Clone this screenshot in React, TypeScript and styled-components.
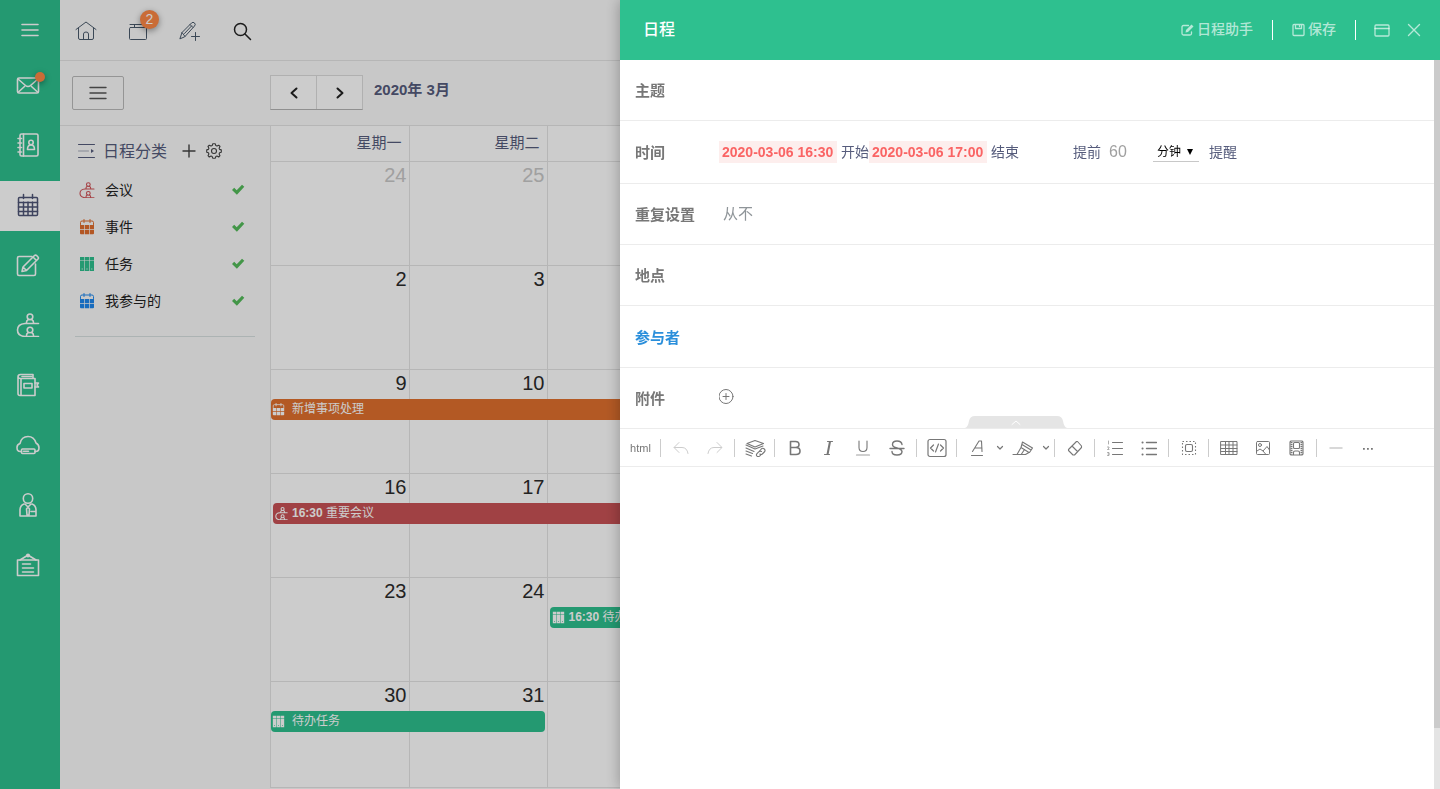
import React, { ReactNode } from "react";
import styled, { createGlobalStyle, css } from "styled-components";

const GlobalStyle = createGlobalStyle`
  *, *::before, *::after { box-sizing: border-box; }
  html, body, #root { height: 100%; }
  body {
    margin: 0;
    overflow: hidden;
    font-family: "Liberation Sans", "Noto Sans CJK SC", sans-serif;
    font-size: 14px;
    line-height: 20px;
    color: #5a5f7d;
  }
  button, input, select, textarea { font: inherit; color: inherit; margin: 0; }
  h1, h2, ul { margin: 0; padding: 0; }
`;

const green = "#2dc08e";

/* ---------- icons ---------- */

const Glyph = styled.svg`
  display: block;
  flex: none;
  fill: none;
  stroke: currentColor;
  stroke-linecap: round;
  stroke-linejoin: round;
`;

type IconProps = { w: number; h?: number; sw?: number; children: ReactNode };

function Icon({ w, h = w, sw = 1, children }: IconProps) {
  return (
    <Glyph width={w} height={h} viewBox={`0 0 ${w} ${h}`} strokeWidth={sw} aria-hidden="true">
      {children}
    </Glyph>
  );
}

const MenuLines = ({ sw = 1 }: { sw?: number }) => (
  <Icon w={18} h={14} sw={sw}>
    <path d="M1 1.500h16M1 7h16M1 12.500h16" />
  </Icon>
);

const MailIcon = () => (
  <Icon w={24} sw={1.6}>
    <rect x="1.500" y="5" width="21" height="15" rx="1.500" />
    <path d="M2 6l7.500 6.500q2.500 2 5 0L22 6M2.500 19l6-5.500M21.500 19l-6-5.500" />
  </Icon>
);

const ContactsIcon = () => (
  <Icon w={24} sw={1.6}>
    <rect x="4" y="1" width="18" height="22" rx="1.500" />
    <path d="M7.500 1v22M2 5.500h3.500M2 10h3.500M2 14.500h3.500M2 19h3.500" />
    <circle cx="15" cy="9.500" r="2.200" />
    <path d="M11.500 16.500q0-4.500 3.500-4.500t3.500 4.500z" />
  </Icon>
);

const CalendarIcon = () => (
  <Icon w={24} sw={1.5}>
    <rect x="2.500" y="4.500" width="19" height="18" rx="1" />
    <path d="M7.500 1.500v4M16.500 1.500v4M2.500 9.500h19M2.500 14h19M2.500 18.500h19M7.500 9v13M12 9v13M16.500 9v13" />
  </Icon>
);

const NoteIcon = () => (
  <Icon w={24} sw={1.6}>
    <path d="M16 3.500H3q-1.500 0-1.500 1.500v16q0 1.500 1.500 1.500h15q1.500 0 1.500-1.500V11" />
    <path d="M6 18.500l1-4.500L18.500 2.500q1-1 2.300.200l1 1q1.200 1.300.200 2.300L10.500 17.500zM17 4l3.500 3.500M7.500 14.500l3 3" />
  </Icon>
);

const MeetingIcon = ({ size = 24, sw = 1.6 }: { size?: number; sw?: number }) => (
  <Glyph width={size} height={size} viewBox="0 0 24 24" strokeWidth={sw} aria-hidden="true">
    <circle cx="14" cy="3.800" r="2.800" />
    <circle cx="14" cy="17" r="2.800" />
    <path d="M22.500 10.500H9q-7.500.500-7.500 6.500t7.500 6.500h13.500M12.300 6.500q-2 1-2 4M15.700 6.500q2 1 2 4M12.300 19.500q-2 1-2 4M15.700 19.500q2 1 2 4" />
  </Glyph>
);

const BookIcon = () => (
  <Icon w={24} sw={1.6}>
    <path d="M17 5V1.500H4.500Q2 1.500 2 4v16.500q0 2 2 2h15V5.500H4.500Q2 5.500 2 3.500M5 5.500v17" />
    <rect x="8" y="10.500" width="8" height="4.500" />
    <path d="M6 3.500h10M19 10h3.500l-1.500 2 1.500 2H19" />
  </Icon>
);

const CloudIcon = () => (
  <Icon w={24} sw={1.6}>
    <path d="M5.500 18.500H4.200Q1 18.500 1 14.500q0-3 3-4Q5.500 3.500 12 3.500q6 0 8 6.500 3 1.500 3 4.700 0 3.800-3.500 3.800h-.500" />
    <rect x="5.500" y="16" width="13.500" height="4.500" rx="1" />
    <path d="M7.500 18.300h5" />
  </Icon>
);

const PersonIcon = () => (
  <Icon w={24} sw={1.6}>
    <circle cx="12" cy="5.500" r="4.700" />
    <path d="M8 11q-4 1.500-4 6v6h16v-6q0-4.500-4-6M9 11l3 3 3-3M12 14l-1.500 2 .500 6h2l.500-6zM15 18.500h4" />
  </Icon>
);

const BoardIcon = () => (
  <Icon w={24} sw={1.6}>
    <rect x="1.500" y="7" width="21" height="15.500" />
    <path d="M4 7l6.500-4h3L20 7M6.500 11h8M6.500 15h11M6.500 19h11" />
    <circle cx="12" cy="2.500" r="1.300" fill="currentColor" />
  </Icon>
);

const HomeIcon = () => (
  <Icon w={22}>
    <path d="M1 9.500L11 2l10 7.500M3.500 8v10q0 1.500 1.500 1.500h12q1.500 0 1.500-1.500V8M8.500 19v-5q0-2 2.500-2t2.500 2v5" />
  </Icon>
);

const BoxIcon = () => (
  <Icon w={22}>
    <rect x="2.500" y="7.500" width="17" height="12" rx="1" />
    <path d="M3 4.500h16M7.500 4.500v2.500" />
  </Icon>
);

const PencilPlusIcon = () => (
  <Icon w={22}>
    <path d="M1 18.500l2-6L12.500 3q1.500-1.500 3 0t0 3L6 16.500zM3 12.500l3 4M11 4.500l3 3M5.500 13.500l7-7.500M16.500 12.500v8M12.500 16.500h8" />
  </Icon>
);

const SearchIcon = () => (
  <Icon w={22} sw={1.5}>
    <circle cx="9.500" cy="9.500" r="6" />
    <path d="M14 14l5.500 5.500" />
  </Icon>
);

const SmallCalendar = ({ size = 16 }: { size?: number }) => (
  <Glyph width={size} height={size} viewBox="0 0 16 16" strokeWidth="1" aria-hidden="true">
    <path d="M1.500 5.500v-2q0-1.500 1.500-1.500h10q1.500 0 1.500 1.500v2M5 .500v3M11 .500v3" />
    <path
      d="M1 6h4.200v4.200H1zM5.900 6h4.200v4.200H5.900zM10.800 6H15v4.200h-4.200zM1 11h4.200v4.200H2q-1 0-1-1zM5.900 11h4.200v4.200H5.900zM10.800 11H15v3.200q0 1-1 1h-3.200z"
      fill="currentColor"
      stroke="none"
    />
  </Glyph>
);

const TaskIcon = ({ size = 16 }: { size?: number }) => (
  <Glyph width={size} height={size} viewBox="0 0 16 16" aria-hidden="true">
    <path
      fillRule="evenodd"
      fill="currentColor"
      stroke="none"
      d="M1 1h4.300v3H1zM5.900 1h4.200v3H5.900zM10.700 1H15v3h-4.300zM1 4.600h4.300V15H1zM5.900 4.600h4.200V15H5.900zM10.700 4.600H15V15h-4.300zM2.700 12.500v1h1v-1zM7.500 12.500v1h1v-1zM12.300 12.500v1h1v-1z"
    />
  </Glyph>
);

const CheckIcon = () => (
  <Icon w={14} h={12}>
    <path d="M1 6l2.200-2.200 2.500 2.400L11 .700l2.300 2L5.900 10.800z" fill="currentColor" stroke="none" />
  </Icon>
);

const Chevron = ({ d, w = 10, h = 12, sw = 2 }: { d: string; w?: number; h?: number; sw?: number }) => (
  <Icon w={w} h={h} sw={sw}>
    <path d={d} />
  </Icon>
);

const GearIcon = () => (
  <Icon w={16} sw={1.1}>
    <path d="M6.700.800h2.600l.500 1.800 1.200.500 1.700-.900 1.300 1.300-.900 1.700.500 1.200 1.700.500v2.400l-1.700.500-.500 1.200.900 1.700-1.300 1.300-1.700-.900-1.200.500-.500 1.600H6.700l-.500-1.600-1.200-.500-1.700.900L2 12.700l.900-1.700-.500-1.200-1.700-.500V6.900l1.700-.500.500-1.200L2 3.500l1.300-1.300 1.700.900 1.200-.500z" />
    <circle cx="8" cy="8" r="2.500" />
  </Icon>
);

/* ---------- left rail ---------- */

const Page = styled.div`
  display: flex;
  min-height: 100%;
  background: #fafafa;
`;

const Rail = styled.nav`
  flex: none;
  width: 60px;
  background: ${green};
  display: flex;
  flex-direction: column;
  gap: 10px;
`;

const RailButton = styled.button<{ $active?: boolean; $first?: boolean }>`
  display: flex;
  align-items: center;
  justify-content: center;
  width: 60px;
  height: ${(p) => (p.$first ? 51 : 50)}px;
  padding: ${(p) => (p.$first ? "9px 0 0 0" : "0 4px 2px 0")};
  border: 0;
  background: ${(p) => (p.$active ? "#fff" : "transparent")};
  color: ${(p) => (p.$active ? "#4e5476" : "#fff")};
`;

const Anchor = styled.span`
  position: relative;
  display: block;
`;

const RedDot = styled.span`
  position: absolute;
  top: -1px;
  right: -5px;
  width: 10px;
  height: 10px;
  border-radius: 50%;
  background: #fc8745;
  box-shadow: 0 2px 6px rgba(0, 0, 0, 0.4);
`;

/* ---------- main area ---------- */

const Main = styled.main`
  flex: 1;
  min-width: 0;
  display: flex;
  flex-direction: column;
`;

const TopBar = styled.header`
  display: flex;
  align-items: center;
  height: 61px;
  border-bottom: 1px solid #e4e4e4;
`;

const TopButton = styled.button`
  display: flex;
  align-items: center;
  justify-content: center;
  width: 52px;
  height: 52px;
  padding: 2px 0 0;
  border: 0;
  background: transparent;
  color: #4a5a6c;
`;

const DarkTopButton = styled(TopButton)`
  color: #222;
`;

const CountBadge = styled.span`
  position: absolute;
  top: -10px;
  right: -10px;
  width: 19px;
  height: 19px;
  border-radius: 50%;
  background: #fc8745;
  color: #fff;
  font-size: 14px;
  line-height: 19px;
  text-align: center;
  box-shadow: 0 2px 6px rgba(0, 0, 0, 0.4);
`;

const CalendarBar = styled.div`
  display: flex;
  height: 65px;
  padding: 14px 12px 0;
  border-bottom: 1px solid #e4e4e4;
`;

const ToggleButton = styled.button`
  display: flex;
  align-items: center;
  justify-content: center;
  width: 52px;
  height: 34px;
  margin: 1px 146px 0 0;
  padding: 0;
  border: 1px solid #bbb;
  border-radius: 2px;
  background: transparent;
  color: #555;
`;

const Pager = styled.div`
  display: flex;
  height: 35px;
  border: 1px solid #ddd;
  border-bottom-color: #b5b5b5;
  background: #fff;
`;

const PagerButton = styled.button`
  display: flex;
  align-items: center;
  justify-content: center;
  width: 45px;
  padding: 0;
  border: 0;
  background: transparent;
  color: #222;
  & + & { border-left: 1px solid #ddd; width: 46px; }
`;

const MonthTitle = styled.h2`
  margin-left: 11px;
  padding-top: 5px;
  font-size: 15px;
  line-height: 20px;
  color: #565c7c;
`;

const Body = styled.div`
  flex: 1;
  display: flex;
  padding-bottom: 1px;
`;

const Sidebar = styled.aside`
  flex: none;
  width: 210px;
  padding: 11px 15px 0;
`;

const CategoryHead = styled.div`
  display: flex;
  align-items: center;
  height: 28px;
  padding-left: 3px;
  margin-bottom: 7px;
  color: #565c7c;
`;

const CategoryTitle = styled.h2`
  margin: 0 15px 0 8px;
  padding-top: 2px;
  font-size: 16px;
  font-weight: 400;
  line-height: 24px;
`;

const BareButton = styled.button`
  display: flex;
  padding: 0;
  border: 0;
  background: transparent;
  color: #444;
`;

const GearButton = styled(BareButton)`
  margin-left: 10px;
`;

const AttachButton = styled(BareButton)`
  color: #777;
`;

const CategoryList = styled.ul`
  list-style: none;
  padding-bottom: 16px;
  border-bottom: 1px solid #d8e0e0;
`;

const CategoryRow = styled.li`
  display: flex;
  align-items: center;
  height: 37px;
  padding: 0 10px 2px 4px;
`;

const Tint = styled.span<{ $color: string }>`
  color: ${(p) => p.$color};
`;

const CategoryName = styled.span`
  flex: 1;
  padding-left: 10px;
  color: #222;
`;

const MonthTable = styled.table`
  flex: 1;
  height: 100%;
  border-collapse: collapse;
  table-layout: fixed;
  background: #fff;
`;

const MonthGrid = styled.div`
  flex: 1;
  display: flex;
  border-left: 1px solid #e4e4e4;
`;

const WeekdayCell = styled.th`
  width: 138px;
  height: 35px;
  padding: 0 7px 0 0;
  border-right: 1px solid #e4e4e4;
  border-bottom: 1px solid #e4e4e4;
  font-size: 15px;
  font-weight: 400;
  text-align: right;
  color: #565c7c;
  &:last-child { width: auto; }
`;

const WeekRow = styled.tr`
  height: 104px;
  &:last-child { height: auto; }
`;

const DayCell = styled.td`
  padding: 0;
  vertical-align: top;
  border-right: 1px solid #e4e4e4;
  border-bottom: 1px solid #e4e4e4;
`;

const DayNumber = styled.div<{ $muted?: boolean }>`
  height: 29px;
  padding: 1px 2px 0 0;
  font-size: 20px;
  line-height: 24px;
  text-align: right;
  color: ${(p) => (p.$muted ? "#c8c8c8" : "#2b2b2b")};
`;

const EventBar = styled.div<{ $color: string; $span: string; $inset?: boolean }>`
  position: relative;
  display: flex;
  align-items: center;
  gap: 4px;
  width: ${(p) => p.$span};
  height: 21px;
  margin: 0 0 0 ${(p) => (p.$inset ? 2 : 0)}px;
  padding-left: ${(p) => (p.$inset ? 2 : 1)}px;
  border-radius: 4px;
  background: ${(p) => p.$color};
  color: #fff;
  font-size: 12px;
  line-height: 21px;
  white-space: nowrap;
`;

const EventText = styled.span<{ $timed?: boolean }>`
  padding-left: ${(p) => (p.$timed ? 0 : 3)}px;
`;

/* ---------- drawer ---------- */

const Shade = styled.div`
  position: fixed;
  inset: 0;
  background: rgba(0, 0, 0, 0.2);
`;

const Drawer = styled.section`
  position: fixed;
  top: 0;
  bottom: 0;
  left: 620px;
  right: 0;
  display: flex;
  flex-direction: column;
  background: #fff;
  box-shadow: 0 0 14px rgba(0, 0, 0, 0.3);
`;

const DrawerHead = styled.header`
  flex: none;
  display: flex;
  align-items: center;
  height: 60px;
  padding: 0 19px 0 23px;
  background: #2ec08f;
  color: #fff;
`;

const DrawerTitle = styled.h1`
  flex: 1;
  font-size: 16px;
  font-weight: 500;
  line-height: 24px;
`;

const HeadButton = styled.button`
  display: flex;
  align-items: center;
  gap: 3px;
  padding: 0;
  border: 0;
  background: transparent;
  color: rgba(255, 255, 255, 0.65);
  font-weight: 500;
`;

const HeadText = styled.span`
  padding-bottom: 2px;
`;

const HeadRule = styled.span`
  width: 1px;
  height: 20px;
  margin: 0 18px 0 19px;
  background: #fff;
`;

const WindowButtons = styled.div`
  display: flex;
  align-items: center;
  gap: 17px;
`;

const DrawerBody = styled.div`
  flex: 1;
  display: flex;
  min-height: 0;
`;

const ScrollTrack = styled.div`
  flex: none;
  width: 6px;
  background: #e4e4e4;
`;

const ScrollThumb = styled.div`
  height: 668px;
  background: #cbcbcb;
`;

const Form = styled.form`
  flex: 1;
  min-width: 0;
  display: flex;
  flex-direction: column;
`;

const rowLabel = css`
  width: 84px;
  flex: none;
  padding-top: 2px;
  font-size: 15px;
  font-weight: 700;
`;

const FormRow = styled.div<{ $height?: number }>`
  position: relative;
  flex: none;
  display: flex;
  align-items: center;
  height: ${(p) => p.$height ?? 61}px;
  padding-left: 15px;
  border-bottom: 1px solid #ececec;
`;

const RowLabel = styled.label`
  ${rowLabel}
  color: #777;
`;

const RowLink = styled.a`
  ${rowLabel}
  color: #2b8fdb;
  text-decoration: none;
`;

const LineInput = styled.input`
  flex: 1;
  min-width: 0;
  height: 40px;
  padding: 0 4px 3px;
  border: 0;
  outline: 0;
  background: transparent;
  font-size: 15px;
  color: #8f9599;
`;

const DateInput = styled.input`
  width: 118px;
  height: 22px;
  padding: 0 3px;
  border: 0;
  background: #fdeeed;
  color: #fa6464;
  font-size: 14px;
  font-weight: 700;
`;

const Words = styled.span<{ $left?: number; $right?: number }>`
  margin-left: ${(p) => p.$left ?? 0}px;
  margin-right: ${(p) => p.$right ?? 0}px;
  color: #565c7c;
`;

const MinutesInput = styled.input`
  width: 44px;
  height: 22px;
  padding: 0;
  border: 0;
  background: transparent;
  font-size: 16px;
  color: #a0a0a0;
`;

const UnitWrap = styled.span`
  position: relative;
  display: block;
`;

const UnitSelect = styled.select`
  display: block;
  width: 46px;
  height: 20px;
  padding: 0 0 0 4px;
  border: 0;
  border-bottom: 1px solid #c8c8c8;
  border-radius: 0;
  appearance: none;
  background: transparent;
  color: #000;
  font-size: 12px;
`;

const UnitArrow = styled.span`
  position: absolute;
  top: 7px;
  right: 6px;
  pointer-events: none;
  color: #000;
`;

const CollapseTab = styled.button`
  position: absolute;
  left: 345px;
  bottom: 0;
  display: block;
  padding: 0;
  border: 0;
  background: transparent;
`;

const Toolbar = styled.div`
  flex: none;
  display: flex;
  align-items: center;
  height: 38px;
  padding-left: 1px;
  border-bottom: 1px solid #ececec;
`;

const ToolGroup = styled.div`
  display: flex;
  gap: 1px;
  padding: 0 3px;
`;

const ToolRule = styled.span`
  width: 1px;
  height: 18px;
  background: #ccc;
`;

const ToolButton = styled.button<{ $narrow?: boolean; $faint?: boolean }>`
  display: flex;
  align-items: center;
  justify-content: center;
  width: ${(p) => (p.$narrow ? 11 : 33)}px;
  height: 28px;
  padding: 0;
  border: 0;
  background: transparent;
  color: ${(p) => (p.$faint ? "#ccc" : "#777")};
  font-size: 11px;
`;

const EditorArea = styled.textarea`
  flex: 1;
  min-height: 0;
  padding: 12px;
  border: 0;
  outline: 0;
  resize: none;
  background: #fff;
`;

/* ---------- data ---------- */

const railItems: { name: string; icon: ReactNode; active?: boolean; dot?: boolean }[] = [
  { name: "邮件", icon: <MailIcon />, dot: true },
  { name: "通讯录", icon: <ContactsIcon /> },
  { name: "日程", icon: <CalendarIcon />, active: true },
  { name: "便签", icon: <NoteIcon /> },
  { name: "会议", icon: <MeetingIcon /> },
  { name: "日记", icon: <BookIcon /> },
  { name: "网盘", icon: <CloudIcon /> },
  { name: "人事", icon: <PersonIcon /> },
  { name: "公告", icon: <BoardIcon /> },
];

const categories = [
  { name: "会议", color: "#cf5055", icon: <MeetingIcon size={16} sw={1.6} /> },
  { name: "事件", color: "#e06d2e", icon: <SmallCalendar /> },
  { name: "任务", color: green, icon: <TaskIcon /> },
  { name: "我参与的", color: "#1e88ee", icon: <SmallCalendar /> },
];

type CalEvent = { col: number; text: string; time?: string; color: string; span: string; icon: ReactNode };

const weeks: { days: [string, string]; muted?: boolean; event?: CalEvent }[] = [
  { days: ["24", "25"], muted: true },
  { days: ["2", "3"] },
  {
    days: ["9", "10"],
    event: { col: 0, text: "新增事项处理", color: "#e0702e", span: "400%", icon: <SmallCalendar size={13} /> },
  },
  {
    days: ["16", "17"],
    event: { col: 0, time: "16:30", text: "重要会议", color: "#c85255", span: "400%", icon: <MeetingIcon size={13} sw={2} /> },
  },
  {
    days: ["23", "24"],
    event: { col: 2, time: "16:30", text: "待办任务", color: green, span: "100%", icon: <TaskIcon size={13} /> },
  },
  {
    days: ["30", "31"],
    event: { col: 0, text: "待办任务", color: green, span: "calc(200% - 1px)", icon: <TaskIcon size={13} /> },
  },
];

function CalendarEvent({ event }: { event: CalEvent }) {
  return (
    <EventBar $color={event.color} $span={event.span} $inset={!!event.time}>
      {event.icon}
      <EventText $timed={!!event.time}>
        {event.time && <b>{event.time}</b>} {event.text}
      </EventText>
    </EventBar>
  );
}

function Background() {
  return (
    <Page>
      <Rail>
        <RailButton $first aria-label="菜单">
          <MenuLines sw={1.6} />
        </RailButton>
        {railItems.map((item) => (
          <RailButton key={item.name} $active={item.active} aria-label={item.name}>
            <Anchor>
              {item.icon}
              {item.dot && <RedDot />}
            </Anchor>
          </RailButton>
        ))}
      </Rail>
      <Main>
        <TopBar>
          <TopButton aria-label="首页"><HomeIcon /></TopButton>
          <TopButton aria-label="待办">
            <Anchor>
              <BoxIcon />
              <CountBadge>2</CountBadge>
            </Anchor>
          </TopButton>
          <TopButton aria-label="新建"><PencilPlusIcon /></TopButton>
          <DarkTopButton aria-label="搜索"><SearchIcon /></DarkTopButton>
        </TopBar>
        <CalendarBar>
          <ToggleButton aria-label="折叠"><MenuLines sw={1.4} /></ToggleButton>
          <Pager>
            <PagerButton aria-label="上月"><Chevron d="M7.500 1.500L2.500 6l5 4.500" /></PagerButton>
            <PagerButton aria-label="下月"><Chevron d="M2.500 1.500L7.500 6l-5 4.500" /></PagerButton>
          </Pager>
          <MonthTitle>2020年 3月</MonthTitle>
        </CalendarBar>
        <Body>
          <Sidebar>
            <CategoryHead>
              <Icon w={17} h={16}>
                <path d="M.500 1.500h16M.500 14.500h16" />
                <path d="M.500 8h10" opacity=".5" />
                <path d="M13 6l3 2-3 2z" fill="currentColor" stroke="none" />
              </Icon>
              <CategoryTitle>日程分类</CategoryTitle>
              <BareButton aria-label="添加分类">
                <Icon w={14} sw={1.4}><path d="M7 1v12M1 7h12" /></Icon>
              </BareButton>
              <GearButton aria-label="分类设置"><GearIcon /></GearButton>
            </CategoryHead>
            <CategoryList>
              {categories.map((c) => (
                <CategoryRow key={c.name}>
                  <Tint $color={c.color}>{c.icon}</Tint>
                  <CategoryName>{c.name}</CategoryName>
                  <Tint $color="#54bc5a"><CheckIcon /></Tint>
                </CategoryRow>
              ))}
            </CategoryList>
          </Sidebar>
          <MonthGrid>
            <MonthTable>
              <thead>
                <tr>
                  <WeekdayCell>星期一</WeekdayCell>
                  <WeekdayCell>星期二</WeekdayCell>
                  <WeekdayCell />
                </tr>
              </thead>
              <tbody>
                {weeks.map((week) => (
                  <WeekRow key={week.days[0]}>
                    {[0, 1, 2].map((col) => (
                      <DayCell key={col}>
                        <DayNumber $muted={week.muted}>{week.days[col]}</DayNumber>
                        {week.event?.col === col && <CalendarEvent event={week.event} />}
                      </DayCell>
                    ))}
                  </WeekRow>
                ))}
              </tbody>
            </MonthTable>
          </MonthGrid>
        </Body>
      </Main>
    </Page>
  );
}

function EditorToolbar() {
  return (
    <Toolbar>
      <ToolGroup>
        <ToolButton type="button">html</ToolButton>
      </ToolGroup>
      <ToolRule />
      <ToolGroup>
        <ToolButton type="button" $faint aria-label="撤销">
          <Icon w={16} h={14}><path d="M6 1.500L1 6.500l5 5M1.500 6.500H9q5 0 6 6" /></Icon>
        </ToolButton>
        <ToolButton type="button" $faint aria-label="重做">
          <Icon w={16} h={14}><path d="M10 1.500l5 5-5 5M14.500 6.500H7q-5 0-6 6" /></Icon>
        </ToolButton>
      </ToolGroup>
      <ToolRule />
      <ToolGroup>
        <ToolButton type="button" aria-label="超链接">
          <Icon w={22} h={18} sw={1.1}>
            <path d="M3 4.500L11 1.500l8.500 3-8.500 3.500zM2 6l9 4 8-3M2 9l8 3.500M2 12l6.500 2.500M2 15l5.500 2" />
            <path d="M15.500 12l1.800-2q1.500-1.500 3 0t0 3l-2 2q-1.300 1-2.500 0M17.500 12.500q-1.500-1-2.800.300l-1.700 1.800q-1.200 1.400 0 2.500t2.600 0l1.200-1.300" />
          </Icon>
        </ToolButton>
      </ToolGroup>
      <ToolRule />
      <ToolGroup>
        <ToolButton type="button" aria-label="粗体">
          <Icon w={14} h={16} sw={1.6}>
            <path d="M2.500 1.500v13H8q4 0 4-3.500T8 7.500H2.500M2.500 1.500H7.500q3.500 0 3.500 3t-3.500 3" />
          </Icon>
        </ToolButton>
        <ToolButton type="button" aria-label="斜体">
          <Icon w={12} h={16} sw={1.1}><path d="M4.500 1.500h5M1.500 14.500h5M6.500 1.500l-2.500 13M7.500 1.500l-2.500 13" /></Icon>
        </ToolButton>
        <ToolButton type="button" aria-label="下划线">
          <Icon w={16} h={16} sw={1.1}>
            <path d="M4 1v6.500q0 4 4 4t4-4V1" />
            <path d="M1.500 15h13" opacity=".7" />
          </Icon>
        </ToolButton>
        <ToolButton type="button" aria-label="删除线">
          <Icon w={16} h={16} sw={1.4}>
            <path d="M13 4.500q-.500-3.500-5-3.500T3.500 4.500Q3.500 7 8 8t5 3.500q0 3.500-5 3.500t-5-3.500M1 8.500h14" />
          </Icon>
        </ToolButton>
      </ToolGroup>
      <ToolRule />
      <ToolGroup>
        <ToolButton type="button" aria-label="代码">
          <Icon w={20} h={20} sw={1.2}>
            <rect x="1" y="1.500" width="18" height="17" rx="2" />
            <path d="M6.500 7l-3 3 3 3M13.500 7l3 3-3 3M11.500 6l-3 8" />
          </Icon>
        </ToolButton>
      </ToolGroup>
      <ToolRule />
      <ToolGroup>
        <ToolButton type="button" aria-label="文字颜色">
          <Icon w={14} h={18} sw={1.1}>
            <path d="M2.500 12.500L9 2h2.500l.500 10.500M5 9h7M1.500 16.500h11" />
          </Icon>
        </ToolButton>
        <ToolButton type="button" $narrow aria-label="选择文字颜色">
          <Chevron w={8} h={6} sw={1.2} d="M1.500 1.500L4 4l2.500-2.500" />
        </ToolButton>
        <ToolButton type="button" aria-label="背景颜色">
          <Icon w={22} h={16} sw={1.1}>
            <path d="M1 14.500h11M5 14.500l4-7 8 5-3.500 2zM9 7.500L10.500 2l10 6-3 4.500M10 4.500l9 5.500M9.500 14l3-4.500" />
          </Icon>
        </ToolButton>
        <ToolButton type="button" $narrow aria-label="选择背景颜色">
          <Chevron w={8} h={6} sw={1.2} d="M1.500 1.500L4 4l2.500-2.500" />
        </ToolButton>
      </ToolGroup>
      <ToolRule />
      <ToolGroup>
        <ToolButton type="button" aria-label="清除格式">
          <Icon w={16} sw={1.1}><path d="M9.500 1.500L1.500 9.500v1L6 15h1.500l7-7.500v-1.500L10.500 1.500zM5 6l5.500 5.500" /></Icon>
        </ToolButton>
      </ToolGroup>
      <ToolRule />
      <ToolGroup>
        <ToolButton type="button" aria-label="有序列表">
          <Icon w={16} sw={1.1}>
            <path d="M5.500 2.500h10M5.500 8.500h10M5.500 14.500h10" />
            <path d="M1.500 1v3M.500 7h1.500v1L.500 9.500H2M.500 12.500H2v3H.500M1 14h1" strokeWidth=".6" />
          </Icon>
        </ToolButton>
        <ToolButton type="button" aria-label="无序列表">
          <Icon w={16} sw={1.4}>
            <path d="M5.500 2.500h10M5.500 8.500h10M5.500 14.500h10" />
            <path d="M1.500 2.500h.1M1.500 8.500h.1M1.500 14.500h.1" strokeWidth="2" />
          </Icon>
        </ToolButton>
      </ToolGroup>
      <ToolRule />
      <ToolGroup>
        <ToolButton type="button" aria-label="全选">
          <Icon w={16} sw={1.1}>
            <rect x="1.500" y="1.500" width="13" height="13" strokeDasharray="1.500 2" strokeLinecap="butt" />
            <rect x="4.500" y="4.500" width="7" height="7" rx="1.500" />
          </Icon>
        </ToolButton>
      </ToolGroup>
      <ToolRule />
      <ToolGroup>
        <ToolButton type="button" aria-label="表格">
          <Icon w={18} h={14}>
            <path d="M1 .500h16v13H1zM1 4h16M1 7.500h16M1 10.500h16M5.500.500v13M9 .500v13M13 .500v13" />
          </Icon>
        </ToolButton>
        <ToolButton type="button" aria-label="图片">
          <Icon w={14}>
            <rect x=".500" y=".500" width="13" height="13" rx="1" />
            <circle cx="4" cy="4" r="1.500" />
            <path d="M1 10l3-2 3 2 4-4.500L13.500 9M7 10l3 3.500" />
          </Icon>
        </ToolButton>
        <ToolButton type="button" aria-label="视频">
          <Icon w={15} h={16} sw={1.1}>
            <path d="M2 1h11l1 1v12l-1 1H2l-1-1V2z" />
            <path d="M2.500 2v12.500M12.500 2v12.500" strokeWidth="2" strokeDasharray="1.200 .800" strokeLinecap="butt" />
            <rect x="4.500" y="2.500" width="6" height="6" rx="1" />
            <path d="M4.500 14.500v-2q0-1.500 1.500-1.500h3q1.500 0 1.500 1.500v2" />
          </Icon>
        </ToolButton>
      </ToolGroup>
      <ToolRule />
      <ToolGroup>
        <ToolButton type="button" $faint aria-label="分隔线">
          <Icon w={16} h={4} sw={1.5}><path d="M1 2h12" /></Icon>
        </ToolButton>
        <ToolButton type="button" aria-label="更多">
          <Icon w={18} h={4}><path d="M1 2h1.800v1.800H1zM5 2h1.800v1.800H5zM9 2h1.800v1.800H9z" fill="currentColor" stroke="none" /></Icon>
        </ToolButton>
      </ToolGroup>
    </Toolbar>
  );
}

function ScheduleDrawer() {
  return (
    <Drawer>
      <DrawerHead>
        <DrawerTitle>日程</DrawerTitle>
        <HeadButton type="button">
          <Icon w={14} sw={1.3}>
            <path d="M8.500 2.500H3.500q-1.500 0-1.500 1.500v6.500q0 1.500 1.500 1.500H10q1.500 0 1.500-1.500V9" />
            <path d="M5.500 9.500l.500-2.500L11.500 1.500l2 2L8 9z" fill="currentColor" stroke="none" />
          </Icon>
          <HeadText>日程助手</HeadText>
        </HeadButton>
        <HeadRule />
        <HeadButton type="button">
          <Icon w={14} sw={1.3}>
            <path d="M3 1.500h9q1 0 1 1v9q0 1-1 1H3q-1 0-1-1v-9q0-1 1-1zM4.500 1.500v4h6v-4M8.500 2v1.500" />
          </Icon>
          <HeadText>保存</HeadText>
        </HeadButton>
        <HeadRule />
        <WindowButtons>
          <HeadButton type="button" aria-label="窗口">
            <Icon w={16} h={13} sw={1.3}>
              <rect x="1" y="1" width="14" height="11" rx="1" />
              <path d="M1 4.500h14" />
            </Icon>
          </HeadButton>
          <HeadButton type="button" aria-label="关闭">
            <Icon w={14} sw={1.4}><path d="M1.500 1.500l11 11M12.500 1.500l-11 11" /></Icon>
          </HeadButton>
        </WindowButtons>
      </DrawerHead>
      <DrawerBody>
        <Form>
          <FormRow>
            <RowLabel htmlFor="subject">主题</RowLabel>
            <LineInput id="subject" />
          </FormRow>
          <FormRow $height={63}>
            <RowLabel htmlFor="start">时间</RowLabel>
            <DateInput id="start" defaultValue="2020-03-06 16:30" />
            <Words $left={4}>开始</Words>
            <DateInput aria-label="结束时间" defaultValue="2020-03-06 17:00" />
            <Words $left={4} $right={54}>结束</Words>
            <Words as="label" htmlFor="ahead" $right={8}>提前</Words>
            <MinutesInput id="ahead" defaultValue="60" />
            <UnitWrap>
              <UnitSelect aria-label="时间单位"><option>分钟</option></UnitSelect>
              <UnitArrow>
                <Icon w={6} h={7}><path d="M0 0h6L3 6z" fill="currentColor" stroke="none" /></Icon>
              </UnitArrow>
            </UnitWrap>
            <Words $left={10}>提醒</Words>
          </FormRow>
          <FormRow>
            <RowLabel htmlFor="repeat">重复设置</RowLabel>
            <LineInput id="repeat" defaultValue="从不" />
          </FormRow>
          <FormRow>
            <RowLabel htmlFor="place">地点</RowLabel>
            <LineInput id="place" />
          </FormRow>
          <FormRow $height={62}>
            <RowLink href="#members">参与者</RowLink>
            <LineInput aria-label="参与者" />
          </FormRow>
          <FormRow>
            <RowLabel as="span">附件</RowLabel>
            <AttachButton type="button" aria-label="添加附件">
              <Icon w={16} h={18}><circle cx="7" cy="7.500" r="7" /><path d="M7 4.500v6M4 7.500h6" /></Icon>
            </AttachButton>
            <CollapseTab type="button" aria-label="收起">
              <Icon w={102} h={12}>
                <path d="M0 12Q3 11 4 5 5 0 10 0H92q5 0 6 5 1 6 4 7z" fill="#e5e5e5" stroke="none" />
                <path d="M47 8.500l4-3.500 4 3.500" stroke="#fff" />
              </Icon>
            </CollapseTab>
          </FormRow>
          <EditorToolbar />
          <EditorArea aria-label="正文" />
        </Form>
        <ScrollTrack><ScrollThumb /></ScrollTrack>
      </DrawerBody>
    </Drawer>
  );
}

export default function App() {
  return (
    <>
      <GlobalStyle />
      <Background />
      <Shade />
      <ScheduleDrawer />
    </>
  );
}
